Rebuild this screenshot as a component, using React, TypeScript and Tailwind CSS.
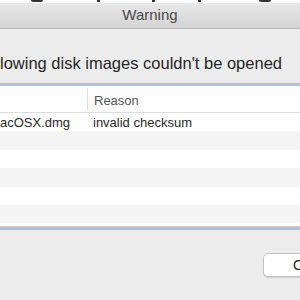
const rows = [
  { name: "acOSX.dmg", reason: "invalid checksum" },
  { name: "", reason: "" },
  { name: "", reason: "" },
  { name: "", reason: "" },
  { name: "", reason: "" },
  { name: "", reason: "" },
];

export default function App() {
  return (
    <div
      className="w-[300px] h-[300px] overflow-hidden bg-[#ececec] flex flex-col"
      style={{ fontFamily: '"Liberation Sans", Arial, sans-serif' }}
    >
      {/* bottom edge of the window behind */}
      <div className="h-[3px] bg-white shrink-0 relative">
        <div className="absolute left-[31px] top-0 w-[12px] h-[2px] bg-[#333] rounded-b-full" />
        <div className="absolute left-[97px] top-0 w-[3px] h-[2px] bg-[#333]" />
        <div className="absolute left-[152px] top-0 w-[3px] h-[2px] bg-[#333]" />
        <div className="absolute left-[198px] top-0 w-[3px] h-[2px] bg-[#333]" />
        <div className="absolute left-[259px] top-0 w-[12px] h-[2px] bg-[#333] rounded-b-full" />
      </div>

      {/* title bar */}
      <div className="h-[26px] shrink-0 bg-gradient-to-b from-[#e8e8e8] to-[#d3d3d3] border-b border-[#b9b9b9] flex items-center justify-center">
        <span className="text-[15px] text-[#4a4a4a]">Warning</span>
      </div>

      {/* message */}
      <div className="pt-[26px] h-[54px] shrink-0 text-[16.5px] leading-[17px] text-[#262626] whitespace-nowrap">
        lowing disk images couldn't be opened
      </div>

      {/* table */}
      <div className="border-y-[3px] border-[#a3c5f1] bg-white shrink-0">
        <div className="h-[27px] flex items-center border-b border-[#dcdcdc] text-[13px] text-[#555]">
          <div className="w-[88px] h-[22px] border-r border-[#dcdcdc]" />
          <div className="pl-[6px] pt-[3px]">Reason</div>
        </div>
        {rows.map((r, i) => (
          <div
            key={i}
            className={`h-[18.4px] flex items-center pt-[2px] text-[13px] text-[#2a2a2a] ${
              i % 2 === 0 ? "bg-white" : "bg-[#f4f4f4]"
            }`}
          >
            <div className="w-[89px] whitespace-nowrap">{r.name}</div>
            <div className="pl-[4px] whitespace-nowrap">{r.reason}</div>
          </div>
        ))}
        <div className="h-[4px] bg-white border-b border-[#cfcfcf]" />
      </div>

      {/* buttons */}
      <div className="pt-[23px] pl-[263px] flex">
        <button className="w-[80px] h-[24px] shrink-0 bg-white rounded-[5px] border border-[#c4c4c4] shadow-[0_1px_1px_rgba(0,0,0,0.12)] text-[14px] text-[#222]">
          OK
        </button>
      </div>
    </div>
  );
}
